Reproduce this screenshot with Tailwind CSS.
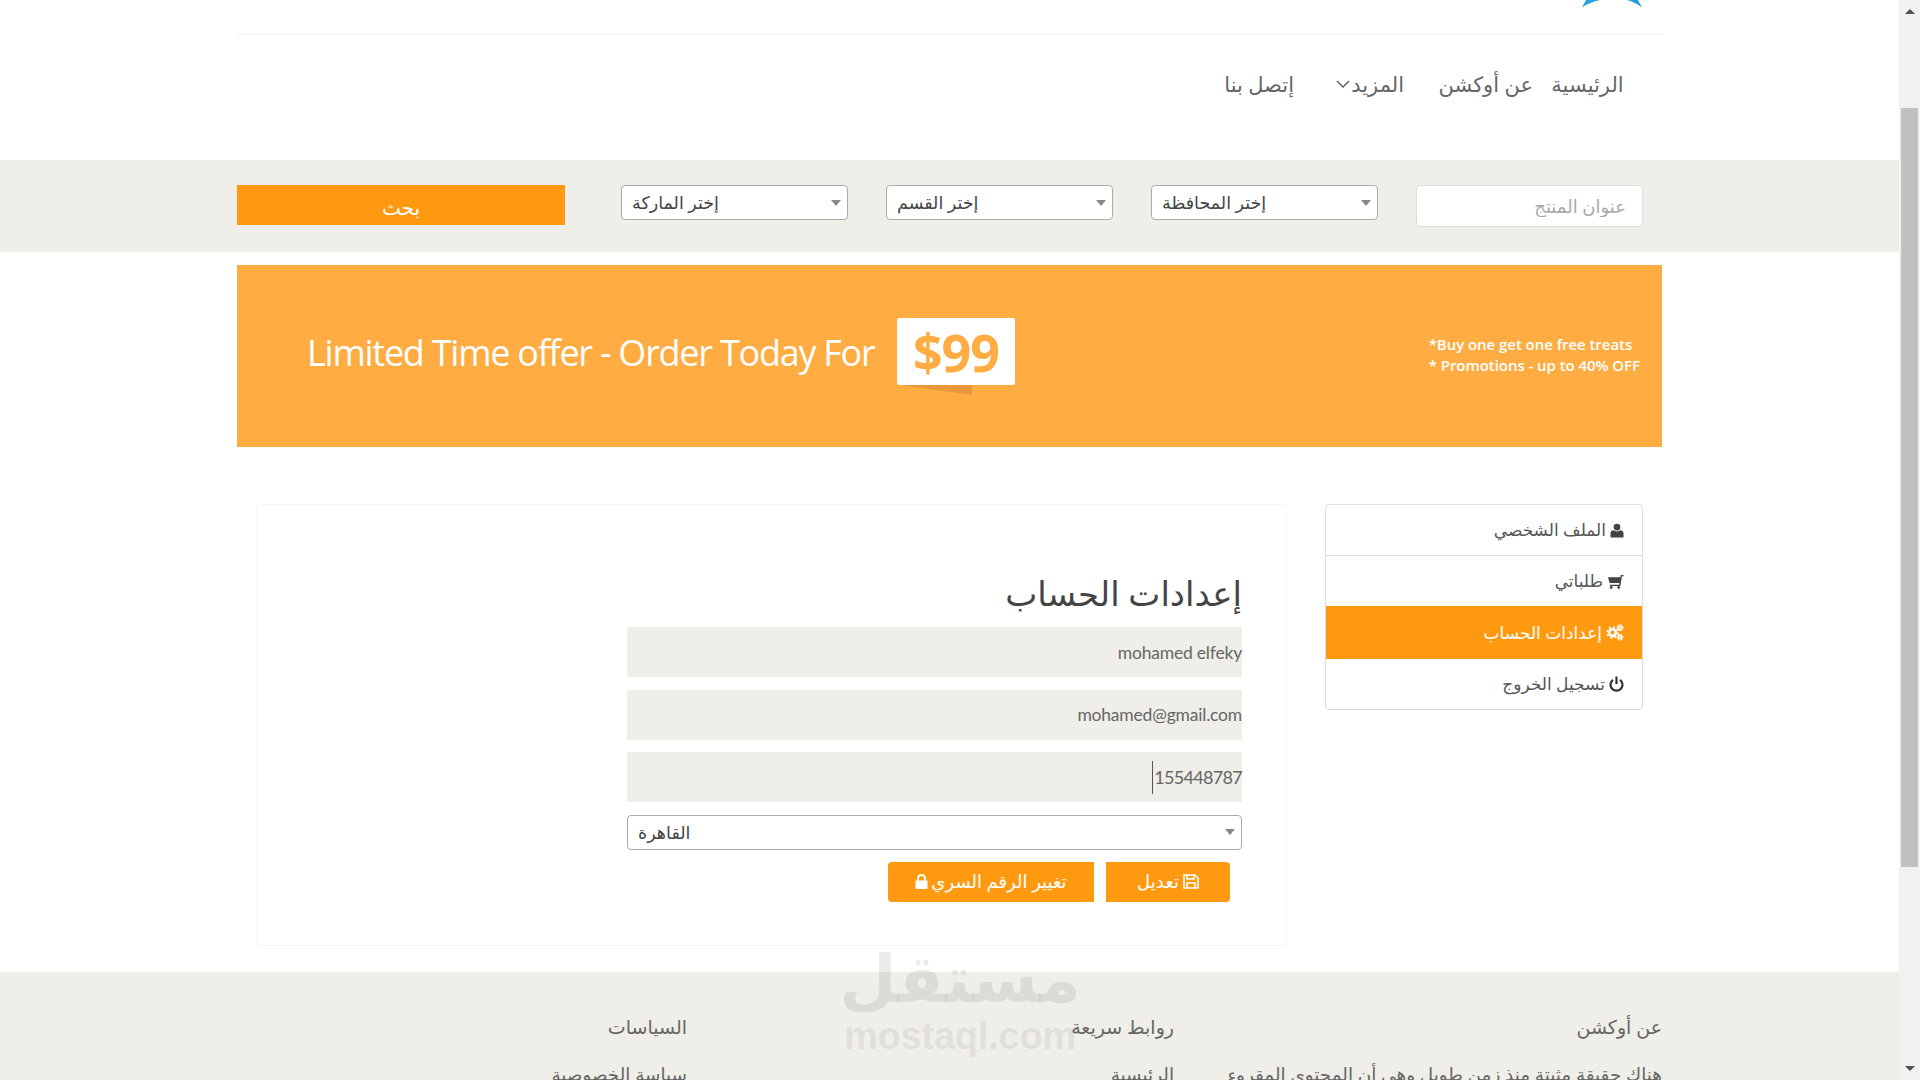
<!DOCTYPE html>
<html lang="ar" dir="rtl">
<head>
  <meta charset="UTF-8" />
  <title>إعدادات الحساب</title>
  <script src="https://cdn.jsdelivr.net/npm/@tailwindcss/browser@4"></script>
</head>
<body class="h-screen overflow-hidden bg-white text-[#555] font-['Lato','DejaVu_Sans',sans-serif]">
<div dir="ltr" class="flex h-[1080px]">
  <div dir="rtl" class="relative w-[1899px] h-[1080px] overflow-hidden">

    <!-- Top strip -->
    <div class="mx-[237px] h-[35px] border-b border-[#f1f1f1] flex justify-start pr-[20px]">
      <svg class="w-[60px] h-[8px]" viewBox="22 0 60 8"><path fill="#2a9fdc" d="M22 7.5 L26 0 L40 0 Q30 2 22 7.5 Z M82 7.5 L78 0 L67 0 Q75 2 82 7.5 Z" /></svg>
    </div>

    <!-- Nav -->
    <nav class="mx-[237px] h-[125px] pr-[38px] pt-[31px] flex items-start text-[21px] text-[#666]">
      <a class="w-[73px] text-center leading-[36px] whitespace-nowrap">الرئيسية</a>
      <a class="mr-[18px] w-[92px] text-center leading-[36px] whitespace-nowrap">عن أوكشن</a>
      <a class="mr-[37px] w-[66px] flex items-center gap-[1px] leading-[36px] whitespace-nowrap">المزيد
        <svg class="w-[14px] h-[8px] shrink-0" viewBox="0 0 14 8"><path d="M1 1 L7 7 L13 1" fill="none" stroke="#555" stroke-width="1.3" /></svg>
      </a>
      <a class="mr-[44px] leading-[36px] whitespace-nowrap">إتصل بنا</a>
    </nav>

    <!-- Search bar -->
    <section class="h-[92px] bg-[#efeee8] pt-[25px] px-[237px] flex items-start">
      <input placeholder="عنوان المنتج" class="mr-[19px] w-[227px] h-[42px] bg-white border border-[#ddd] rounded-[4px] px-4 text-[18px] placeholder:text-[#aaa]" />
      <div dir="ltr" class="mr-[38px] w-[227px] h-[35px] bg-white border border-[#aaa] rounded-[4px] pl-[10px] pr-[6px] flex items-center justify-between text-[17.5px] text-[#444]">
        <span class="pt-[2px]">إختر المحافظة</span><span class="w-0 h-0 border-x-[5px] border-x-transparent border-t-[6px] border-t-[#888]"></span>
      </div>
      <div dir="ltr" class="mr-[38px] w-[227px] h-[35px] bg-white border border-[#aaa] rounded-[4px] pl-[10px] pr-[6px] flex items-center justify-between text-[17.5px] text-[#444]">
        <span class="pt-[2px]">إختر القسم</span><span class="w-0 h-0 border-x-[5px] border-x-transparent border-t-[6px] border-t-[#888]"></span>
      </div>
      <div dir="ltr" class="mr-[38px] w-[227px] h-[35px] bg-white border border-[#aaa] rounded-[4px] pl-[10px] pr-[6px] flex items-center justify-between text-[17.5px] text-[#444]">
        <span class="pt-[2px]">إختر الماركة</span><span class="w-0 h-0 border-x-[5px] border-x-transparent border-t-[6px] border-t-[#888]"></span>
      </div>
      <button class="mr-auto w-[328px] h-[40px] bg-[#ff9a10] text-white text-[20px] leading-[44px]">بحث</button>
    </section>

    <!-- Banner -->
    <section dir="ltr" class="mx-[237px] mt-[13px] h-[182px] bg-[#ffac42] flex items-start text-white">
      <p class="ml-[70px] w-[590px] mt-[63px] text-[36px] leading-[50px] font-['Open_Sans',sans-serif] tracking-[-1.25px] whitespace-nowrap">Limited Time offer - Order Today For</p>
      <div class="relative mt-[53px] w-[118px] h-[67px] bg-white rounded-[2px] flex items-center justify-center text-[#ffac42] text-[52px] font-['Open_Sans',sans-serif] font-bold tracking-[-1px]">$99
        <svg class="absolute left-[4px] top-[67px] w-[71px] h-[10px]" viewBox="0 0 71 10"><path d="M0 0 L71 0 L71 10 Z" fill="#e8973a" /></svg>
      </div>
      <div class="ml-auto mr-[22px] mt-[69px] text-[15px] leading-[21px] font-['Open_Sans',sans-serif] font-semibold tracking-[-0.05px] whitespace-nowrap">
        <p>*Buy one get one free treats</p>
        <p>* Promotions - up to 40% OFF</p>
      </div>
    </section>

    <!-- Content -->
    <main class="mx-[237px] mt-[57px] h-[468px] pr-[19px] flex items-start">
      <aside class="w-[318px] h-[206px] border border-[#ddd] rounded-[4px] bg-white overflow-hidden text-[17px] text-[#555]">
        <a class="h-[51px] border-b border-[#ddd] flex items-center gap-1 pr-[18px]">
          <svg class="w-[14px] h-[15px]" viewBox="0 0 14 14"><circle cx="7" cy="3.6" r="3.4" fill="#444" /><path d="M0.5 14 V10 Q0.5 7.2 3.5 6.8 Q7 9 10.5 6.8 Q13.5 7.2 13.5 10 V14 Z" fill="#444" /></svg>
          الملف الشخصي
        </a>
        <a class="h-[50px] flex items-center gap-1 pr-[18px]">
          <svg class="w-[17px] h-[15px]" viewBox="0 0 15 14"><path d="M15 1 H12.5 L12 3 H0.5 L2 8.5 H11 L10.8 10 H2.5 V11.2 H12 L13.5 2.2 H15 Z" fill="#444" /><circle cx="3.5" cy="12.6" r="1.3" fill="#444" /><circle cx="10.5" cy="12.6" r="1.3" fill="#444" /></svg>
          طلباتي
        </a>
        <a class="h-[53px] bg-[#ff9a10] text-white flex items-center gap-1 pr-[18px]">
          <svg class="w-[18px] h-[17px]" viewBox="0 0 18 17" fill="none" stroke="#fff">
            <circle cx="6.5" cy="8.5" r="3.3" stroke-width="2.6" />
            <circle cx="6.5" cy="8.5" r="5.4" stroke-width="1.6" stroke-dasharray="2.2 2" />
            <circle cx="14" cy="3.8" r="1.6" stroke-width="1.6" />
            <circle cx="14" cy="3.8" r="3" stroke-width="1.1" stroke-dasharray="1.4 1" />
            <circle cx="14" cy="13.2" r="1.6" stroke-width="1.6" />
            <circle cx="14" cy="13.2" r="3" stroke-width="1.1" stroke-dasharray="1.4 1" />
          </svg>
          إعدادات الحساب
        </a>
        <a class="h-[50px] flex items-center gap-1 pr-[18px]">
          <svg class="w-[15px] h-[16px]" viewBox="0 0 15 16" fill="none" stroke="#333" stroke-width="2.2"><path d="M4 3.8 A6 6 0 1 0 11 3.8" /><path d="M7.5 0.5 V8" /></svg>
          تسجيل الخروج
        </a>
      </aside>

      <section class="mr-[38px] w-[1031px] h-[442px] border border-[#f5f5f3] rounded-[4px] pr-[44px] pt-[65px]">
        <h2 class="w-[615px] text-[34px] leading-[46px] text-[#444]">إعدادات الحساب</h2>
        <div class="w-[615px] mt-[11px] flex flex-col gap-[12.5px]">
          <div dir="ltr" class="h-[50px] bg-[#efeee8] flex items-center justify-end pt-[2px] text-[17.5px] tracking-[-0.2px] text-[#666]">mohamed elfeky</div>
          <div dir="ltr" class="h-[50px] bg-[#efeee8] flex items-center justify-end pt-[2px] text-[17.5px] tracking-[-0.2px] text-[#666]">mohamed@gmail.com</div>
          <div dir="ltr" class="h-[50px] bg-[#efeee8] flex items-center justify-end text-[18px] text-[#666]"><span class="border-l border-[#555] leading-[33px] pl-[1px] tracking-[-0.7px]">155448787</span></div>
          <div dir="ltr" class="h-[35px] bg-white border border-[#aaa] rounded-[4px] pl-[10px] pr-[6px] flex items-center justify-between text-[17.5px] text-[#444]">
            <span class="pt-[2px]">القاهرة</span><span class="w-0 h-0 border-x-[5px] border-x-transparent border-t-[6px] border-t-[#888]"></span>
          </div>
        </div>
        <div class="w-[615px] mt-[12px] pr-[12px] flex gap-[12px] text-white text-[18px]">
          <button class="w-[124px] h-[40px] bg-[#ff9a10] rounded-r-[4px] flex items-center justify-center gap-1">
            <svg class="w-[16px] h-[15px]" viewBox="0 0 16 15" fill="none" stroke="#fff" stroke-width="1.6"><path d="M1 1 H12 L15 4 V14 H1 Z" /><path d="M4 1 V5 H11 V1" /><path d="M4 14 V9 H12 V14" /></svg>
            تعديل
          </button>
          <button class="w-[206px] h-[40px] bg-[#ff9a10] rounded-l-[4px] flex items-center justify-center gap-[3px]">
            تغيير الرقم السري
            <svg class="w-[13px] h-[15px]" viewBox="0 0 13 15"><path d="M3 7 V4.5 A3.5 3.5 0 0 1 10 4.5 V7" fill="none" stroke="#fff" stroke-width="2" /><rect x="0.5" y="6.5" width="12" height="8.5" rx="1" fill="#fff" /></svg>
          </button>
        </div>
      </section>
    </main>

    <!-- Footer -->
    <footer class="h-[108px] bg-[#efeee8] mx-0 px-[237px] pt-[37px] flex text-[#666] text-[19px]">
      <div class="w-[488px] shrink-0">
        <h4 class="leading-[36px]">عن أوكشن</h4>
        <p class="mt-[14px] text-[18.4px] whitespace-nowrap leading-[30px]">هناك حقيقة مثبتة منذ زمن طويل وهي أن المحتوى المقروء</p>
      </div>
      <div class="w-[487px] shrink-0">
        <h4 class="leading-[36px]">روابط سريعة</h4>
        <p class="mt-[14px] text-[18.4px] leading-[30px]">الرئيسية</p>
      </div>
      <div>
        <h4 class="leading-[36px]">السياسات</h4>
        <p class="mt-[14px] text-[18.4px] leading-[30px]">سياسة الخصوصية</p>
      </div>
    </footer>

    <!-- Watermark -->
    <div dir="ltr" class="absolute left-[845px] top-[942px] w-[230px] flex flex-col items-center text-black/[0.08] pointer-events-none">
      <span class="font-['DejaVu_Sans',sans-serif] font-bold text-[66px] leading-[76px]">مستقل</span>
      <span class="font-['Liberation_Sans',sans-serif] font-bold text-[38px] leading-[36px] tracking-[-0.2px]">mostaql.com</span>
    </div>
  </div>

  <!-- Scrollbar -->
  <div class="w-[21px] h-[1080px] bg-[#f1f1f1] flex flex-col items-center pt-[9px]">
    <span class="w-0 h-0 border-x-[5px] border-x-transparent border-b-[5px] border-b-[#505050]"></span>
    <div class="mt-[94px] w-[17px] h-[759px] bg-[#c1c1c1]"></div>
    <span class="mt-[199px] w-0 h-0 border-x-[5px] border-x-transparent border-t-[5px] border-t-[#505050]"></span>
  </div>
</div>
</body>
</html>
